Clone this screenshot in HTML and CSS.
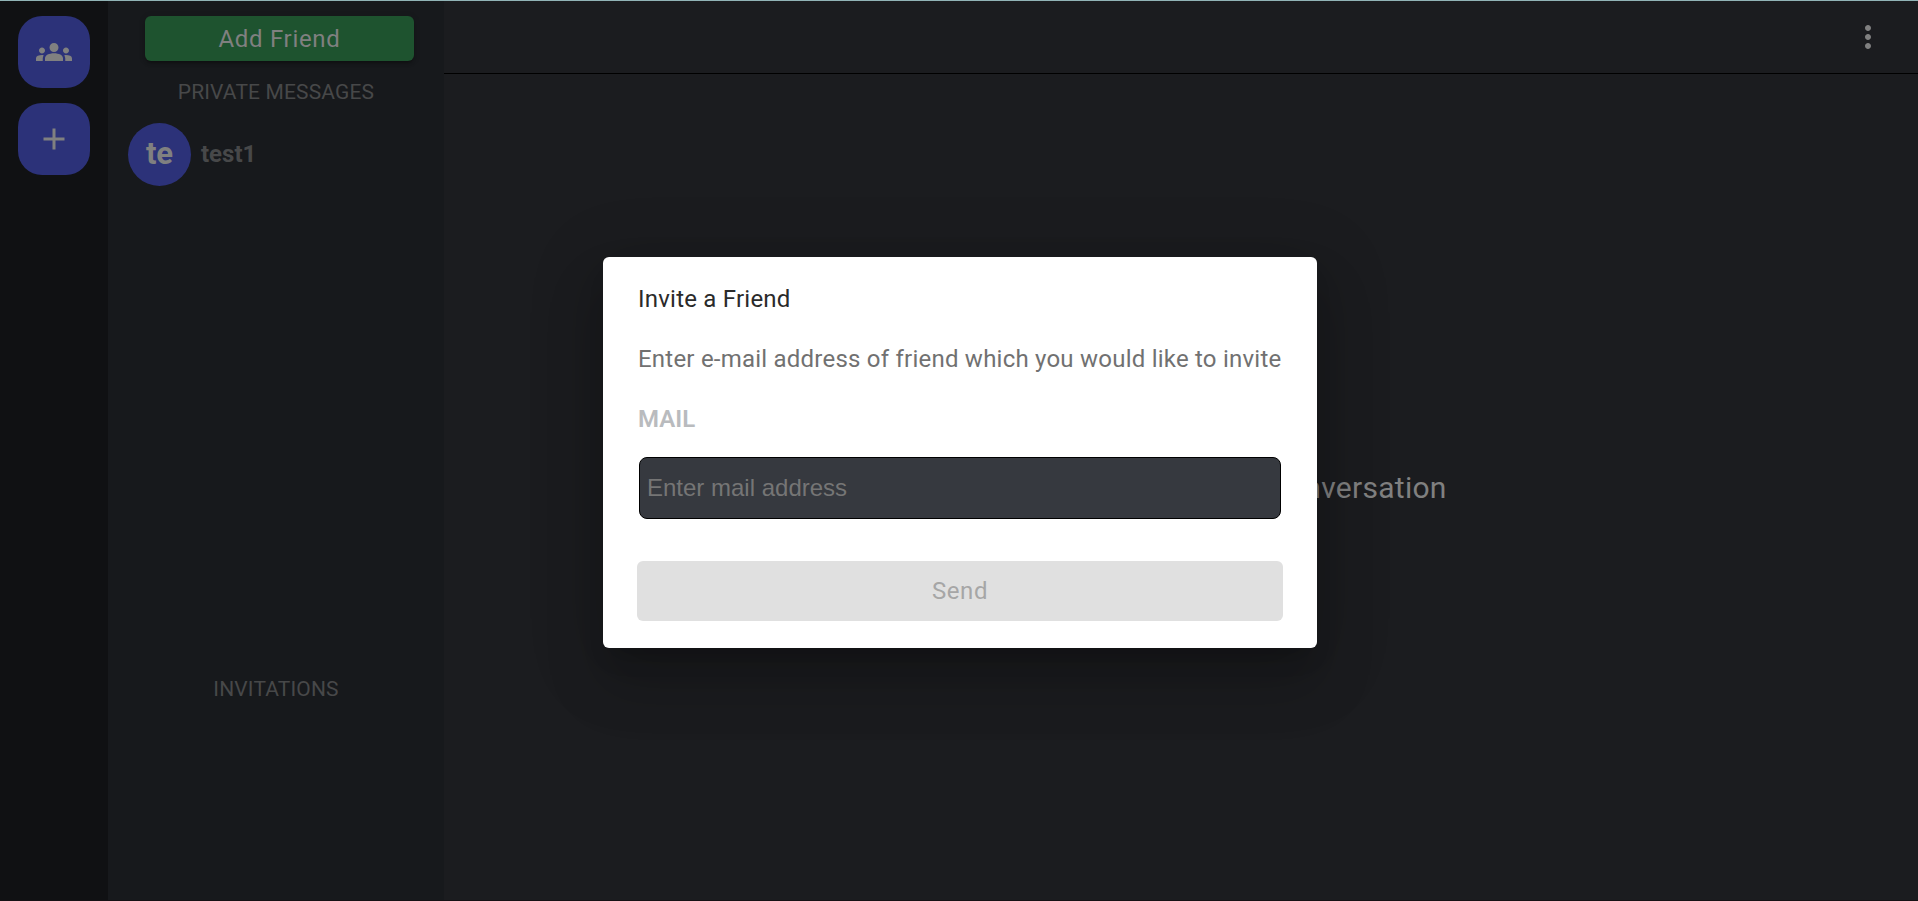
FILE: index.html
```html
<!DOCTYPE html>
<html lang="en">
<head>
<meta charset="utf-8">
<title>Chat</title>
<link rel="stylesheet" href="styles.css">
</head>
<body>
<div class="app">
  <nav class="rail">
    <button class="rail-btn" aria-label="Friends">
      <svg width="36" height="36" viewBox="0 0 24 24"><path d="M12 12.75c1.63 0 3.07.39 4.24.9 1.08.48 1.76 1.56 1.76 2.73V18H6v-1.61c0-1.18.68-2.26 1.76-2.73 1.17-.52 2.61-.91 4.24-.91zM4 13c1.1 0 2-.9 2-2s-.9-2-2-2-2 .9-2 2 .9 2 2 2zm1.13 1.1c-.37-.06-.74-.1-1.13-.1-.99 0-1.93.21-2.78.58C.48 14.9 0 15.62 0 16.43V18h4.5v-1.61c0-.83.23-1.61.63-2.29zM20 13c1.1 0 2-.9 2-2s-.9-2-2-2-2 .9-2 2 .9 2 2 2zm4 3.43c0-.81-.48-1.53-1.22-1.85-.85-.37-1.79-.58-2.78-.58-.39 0-.76.04-1.13.1.4.68.63 1.46.63 2.29V18H24v-1.57zM12 6c1.66 0 3 1.34 3 3s-1.34 3-3 3-3-1.34-3-3 1.34-3 3-3z"/></svg>
    </button>
    <button class="rail-btn" aria-label="Add group">
      <svg width="36" height="36" viewBox="0 0 24 24"><path d="M19 13h-6v6h-2v-6H5v-2h6V5h2v6h6v2z"/></svg>
    </button>
  </nav>
  <aside class="sidebar">
    <button class="add-friend">Add Friend</button>
    <h2 class="section-title">PRIVATE MESSAGES</h2>
    <div class="friends">
      <div class="friend"><span class="avatar">te</span><span class="friend-name">test1</span></div>
    </div>
    <h2 class="section-title">INVITATIONS</h2>
  </aside>
  <main class="main">
    <header class="topbar">
      <svg width="36" height="36" viewBox="0 0 24 24"><path d="M12 8c1.1 0 2-.9 2-2s-.9-2-2-2-2 .9-2 2 .9 2 2 2zm0 2c-1.1 0-2 .9-2 2s.9 2 2 2 2-.9 2-2-.9-2-2-2zm0 6c-1.1 0-2 .9-2 2s.9 2 2 2 2-.9 2-2-.9-2-2-2z"/></svg>
    </header>
    <section class="welcome">To start chatting - choose conversation</section>
  </main>
</div>
<div class="overlay">
  <form class="dialog">
    <h1 class="dialog-title">Invite a Friend</h1>
    <p class="dialog-text">Enter e-mail address of friend which you would like to invite</p>
    <label class="dialog-label" for="mail">MAIL</label>
    <input class="dialog-input" id="mail" type="email" placeholder="Enter mail address">
    <button class="send" disabled>Send</button>
  </form>
</div>
</body>
</html>
```

FILE: styles.css
```css
* { box-sizing: border-box; }
body { margin: 0; font-family: Roboto, sans-serif; overflow: hidden; background: #1b1d20; }
button { border: 0; font-family: inherit; }
svg { fill: #808080; display: block; }
.app { display: flex; height: 901px; border-top: 1px solid #91b4b6; border-bottom: 1px solid #151114; }
.rail { width: 108px; background: #101113; padding-top: 15px; display: flex; flex-direction: column; align-items: center; gap: 15px; }
.rail-btn { width: 72px; height: 72px; padding: 0; border-radius: 24px; background: #2c3279; display: grid; place-items: center; }
.sidebar { flex: 0 0 336px; background: #17191c; padding-top: 15px; display: flex; flex-direction: column; }
.add-friend { width: 269px; height: 45px; margin-left: 37px; padding: 0; border-radius: 6px; background: #1e532f; color: #808080; font-size: 24px; letter-spacing: .69px; box-shadow: 0 4px 2px -3px rgba(0,0,0,.2), 0 3px 3px rgba(0,0,0,.14), 0 1px 7px rgba(0,0,0,.12); }
.section-title { margin: 19px 0 0; font-size: 21px; font-weight: 400; line-height: 25px; letter-spacing: .15px; text-align: center; color: #474849; }
.friends { height: 553px; padding: 18px 20px; }
.friend { display: flex; align-items: center; gap: 10px; }
.avatar { width: 63px; height: 63px; padding-bottom: 2px; border-radius: 50%; background: #2c3279; color: #808080; font-size: 31px; font-weight: 700; display: grid; place-items: center; }
.friend-name { padding-bottom: 2px; font-size: 24px; font-weight: 700; color: #474849; }
.main { flex: 1; display: flex; flex-direction: column; background: #1b1c1f; }
.topbar { height: 73px; border-bottom: 1px solid #000; display: flex; align-items: center; justify-content: flex-end; padding-right: 32px; }
.welcome { flex: 1; display: flex; align-items: center; justify-content: center; color: #808080; font-size: 30px; letter-spacing: .28px; }
.overlay { position: absolute; inset: 0; display: grid; place-items: center; padding: 4px 0 0 2px; }
.dialog { width: 714px; height: 391px; padding: 24px 34px 27px; background: #fff; border-radius: 6px; display: flex; flex-direction: column; box-shadow: 0 16px 22px -10px rgba(0,0,0,.2), 0 36px 57px 4px rgba(0,0,0,.14), 0 13px 69px 12px rgba(0,0,0,.12); }
.dialog-title, .dialog-text, .dialog-label { margin: 0 1px 24px; font-size: 24px; line-height: 36px; font-weight: 400; letter-spacing: .225px; white-space: nowrap; }
.dialog-title { color: #2a2a2a; }
.dialog-text { color: #717171; }
.dialog-label { margin-bottom: 20px; font-weight: 600; color: #b9bbbe; letter-spacing: 0; }
.dialog-input { margin: 0 2px 42px; height: 62px; border: 1px solid #000; border-radius: 8px; background: #36393f; padding: 0 7px; font: 24px "Liberation Sans", Arial, sans-serif; }
.dialog-input::placeholder { color: #757575; }
.send { height: 60px; border-radius: 6px; background: #e0e0e0; color: #a6a6a6; font-size: 24px; letter-spacing: .6px; }
```
